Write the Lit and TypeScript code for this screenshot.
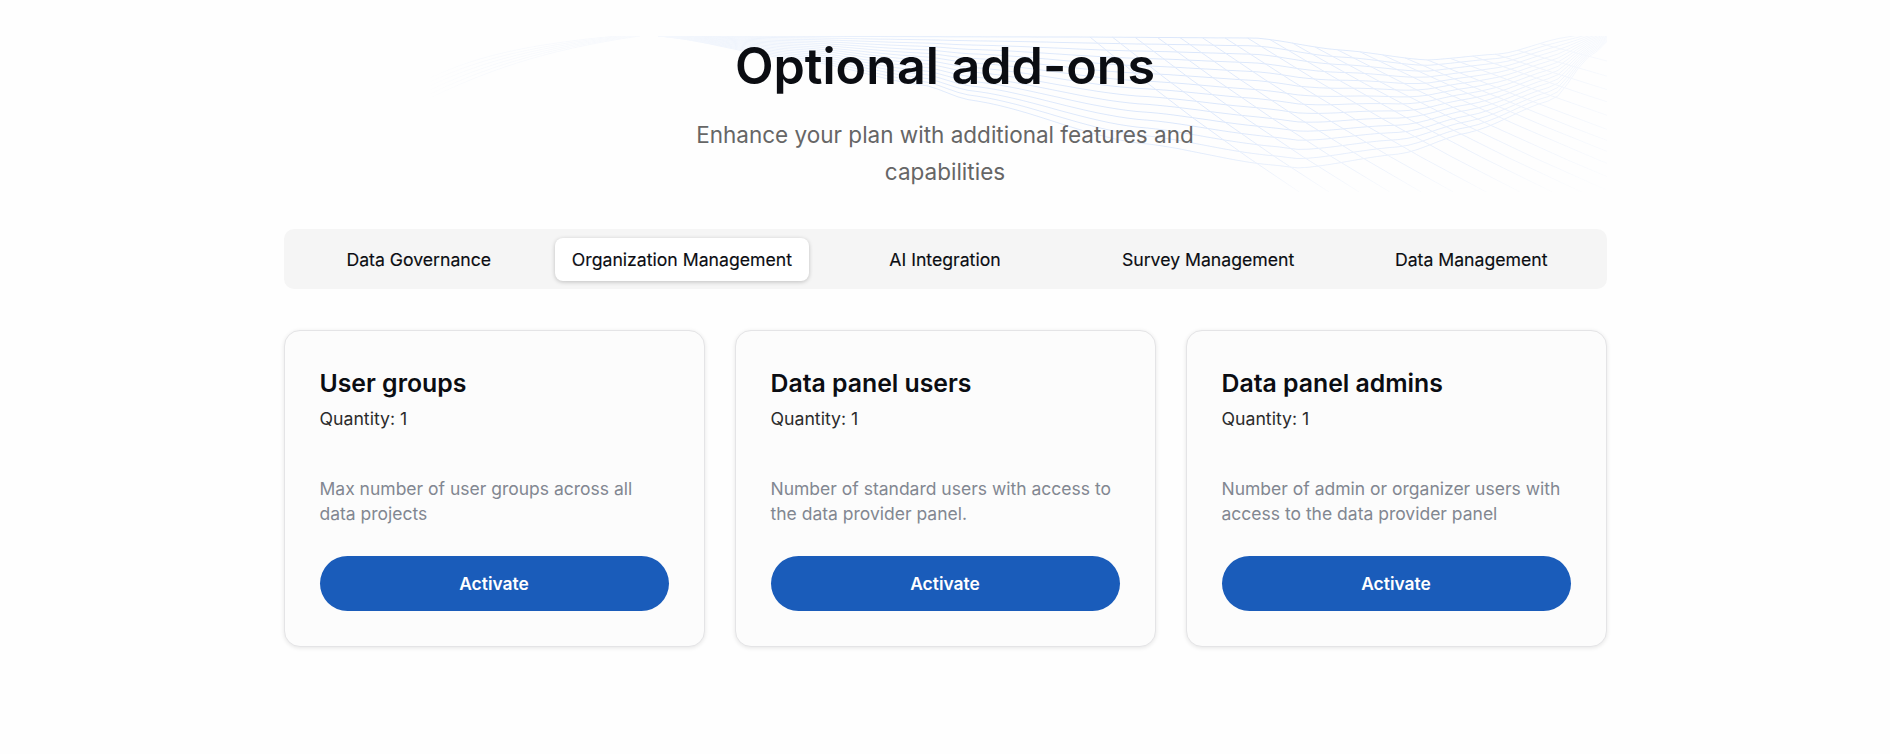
import { LitElement, html, css, svg } from "lit";
import { customElement } from "lit/decorators.js";

const lerpTable = (table: number[][], x: number) => {
  if (x <= table[0][0]) return table[0][1];
  for (let i = 1; i < table.length; i++) {
    if (x <= table[i][0]) {
      const [x0, y0] = table[i - 1];
      const [x1, y1] = table[i];
      const t = (x - x0) / (x1 - x0);
      const s = t * t * (3 - 2 * t);
      return y0 + (y1 - y0) * (t * 0.5 + s * 0.5);
    }
  }
  return table[table.length - 1][1];
};

const TOP = [[658, 0], [1067, 1], [1255, 2], [1340, 14], [1427, 24], [1500, 18], [1567, 1], [1620, -10]];
const LOW = [[658, 0], [800, 24], [923, 49], [970, 64], [1138, 107], [1272, 129], [1300, 132], [1400, 118], [1467, 97], [1553, 64], [1590, 20], [1620, -5]];

const familyA = () => {
  const out: string[] = [];
  const n = 14;
  for (let k = 0; k <= n; k++) {
    const s = Math.pow(k / n, 1.05);
    let d = "";
    for (let x = 658; x <= 1620; x += 10) {
      const t = lerpTable(TOP, x);
      const l = lerpTable(LOW, x);
      d += `${d ? "L" : "M"}${x} ${(t + (l - t) * s).toFixed(1)}`;
    }
    out.push(d);
  }
  return out;
};

const familyB = () => {
  const out: string[] = [];
  const n = 20;
  for (let k = 0; k <= n; k++) {
    const f = k / n;
    const x0 = 1090 + f * 450;
    const y0 = lerpTable(TOP, x0);
    const slope = 0.74 - 0.5 * f;
    const h = 156 - y0;
    const x1 = x0 + h / slope;
    const cx = x0 + (x1 - x0) * 0.5;
    const cy = y0 + h * 0.56;
    out.push(`M${x0.toFixed(1)} ${y0.toFixed(1)}Q${cx.toFixed(1)} ${cy.toFixed(1)} ${x1.toFixed(1)} 156`);
  }
  return out;
};

const familyC = () => {
  const out: string[] = [];
  for (let k = 0; k < 6; k++) {
    const o = k * 4;
    out.push(`M430 ${42 + o}C480 ${18 + o} 540 ${6 + o * 0.4} 640 ${-2 + o * 0.1}`);
  }
  return out;
};

@customElement("app-wave")
export class AppWave extends LitElement {
  static styles = css`
    :host {
      position: absolute;
      left: 420px;
      top: 36px;
      width: 1187px;
      height: 156px;
      display: block;
      pointer-events: none;
    }
    svg {
      display: block;
      width: 100%;
      height: 100%;
      -webkit-mask-image: linear-gradient(to bottom, #000 58%, rgba(0,0,0,0.6) 85%, rgba(0,0,0,0.15) 100%);
      mask-image: linear-gradient(to bottom, #000 58%, rgba(0,0,0,0.6) 85%, rgba(0,0,0,0.15) 100%);
    }
    .a { fill: none; stroke: #dbe7fb; stroke-width: 1; }
    .b { fill: none; stroke: #dfe9fb; stroke-width: 1; }
    .c { fill: none; stroke: #e8effb; stroke-width: 1; }
  `;
  render() {
    return html`<svg viewBox="420 0 1187 156" preserveAspectRatio="none" aria-hidden="true">
      <defs>
        <linearGradient id="fx" x1="420" x2="1607" y1="0" y2="0" gradientUnits="userSpaceOnUse">
          <stop offset="0" stop-color="#fff" stop-opacity="0"></stop>
          <stop offset="0.05" stop-color="#fff" stop-opacity="0.25"></stop>
          <stop offset="0.16" stop-color="#fff" stop-opacity="0.3"></stop>
          <stop offset="0.2" stop-color="#fff" stop-opacity="0.25"></stop>
          <stop offset="0.32" stop-color="#fff" stop-opacity="0.55"></stop>
          <stop offset="0.45" stop-color="#fff" stop-opacity="0.85"></stop>
          <stop offset="0.65" stop-color="#fff"></stop>
          <stop offset="0.88" stop-color="#fff" stop-opacity="0.75"></stop>
          <stop offset="1" stop-color="#fff" stop-opacity="0.2"></stop>
        </linearGradient>
        <mask id="mx" maskUnits="userSpaceOnUse" x="420" y="0" width="1187" height="156">
          <rect x="420" y="0" width="1187" height="156" fill="url(#fx)"></rect>
        </mask>
      </defs>
      <g mask="url(#mx)">
        ${familyC().map((d) => svg`<path class="c" d=${d}></path>`)}
        ${familyA().map((d) => svg`<path class="a" d=${d}></path>`)}
        ${familyB().map((d) => svg`<path class="b" d=${d}></path>`)}
      </g>
    </svg>`;
  }
}

const TABS = ["Data Governance", "Organization Management", "AI Integration", "Survey Management", "Data Management"];
const CARDS = [
  { t: "User groups", d: "Max number of user groups across all data projects" },
  { t: "Data panel users", d: "Number of standard users with access to the data provider panel." },
  { t: "Data panel admins", d: "Number of admin or organizer users with access to the data provider panel" },
];

@customElement("app-root")
export class AppRoot extends LitElement {
  static styles = css`
    :host {
      display: block;
      position: relative;
      min-height: 754px;
      background: #fefefe;
      font-family: Inter, "Liberation Sans", sans-serif;
      color: #0b0d12;
      overflow: hidden;
    }
    .wrap {
      position: relative;
      width: 1323px;
      margin: 0 auto;
      padding-top: 35px;
      display: flex;
      flex-direction: column;
    }
    h1 {
      margin: 0;
      text-align: center;
      font-size: 50.2px;
      line-height: 62px;
      font-weight: 600;
      color: #0b0d12;
    }
    .sub {
      margin: 19px auto 0;
      max-width: 600px;
      text-align: center;
      font-size: 22.5px;
      line-height: 37.4px;
      color: #666;
    }
    .tabs {
      margin-top: 38.2px;
      display: grid;
      grid-template-columns: repeat(5, 1fr);
      column-gap: 9.5px;
      padding: 9px 8.5px 8px 8.5px;
      background: #f5f5f5;
      border-radius: 10px;
    }
    .tab {
      height: 43px;
      display: flex;
      align-items: center;
      justify-content: center;
      border-radius: 8px;
      font-size: 17.65px;
      font-weight: 400;
      color: #0b0d12;
      -webkit-text-stroke: 0.15px #0b0d12;
    }
    .tab.active {
      background: #fff;
      box-shadow: 0 1px 4px rgba(0, 0, 0, 0.22);
    }
    .cards {
      margin-top: 41px;
      display: grid;
      grid-template-columns: repeat(3, 1fr);
      column-gap: 30px;
    }
    .card {
      box-sizing: border-box;
      height: 317px;
      padding: 34px 35px;
      background: #fcfcfc;
      border: 1px solid #e4e4e6;
      border-radius: 16px;
      box-shadow: 0 1px 4px rgba(0, 0, 0, 0.1);
      display: flex;
      flex-direction: column;
    }
    .card h3 {
      margin: 0;
      font-size: 24.8px;
      line-height: 36px;
      font-weight: 600;
      color: #0b0d12;
    }
    .qty {
      margin-top: 6px;
      font-size: 17.7px;
      line-height: 24px;
      color: #2b2b2b;
    }
    .desc {
      margin-top: 45px;
      font-size: 17.5px;
      line-height: 25px;
      color: #828791;
    }
    .btn {
      margin-top: 30px;
      height: 55px;
      border-radius: 28px;
      background: #1a5cba;
      color: #fff;
      display: flex;
      align-items: center;
      justify-content: center;
      font-size: 17.4px;
      font-weight: 600;
    }
  `;
  render() {
    return html`
      <app-wave></app-wave>
      <div class="wrap">
        <h1>Optional add-ons</h1>
        <div class="sub">Enhance your plan with additional features and capabilities</div>
        <div class="tabs">
          ${TABS.map((t, i) => html`<div class="tab ${i === 1 ? "active" : ""}">${t}</div>`)}
        </div>
        <div class="cards">
          ${CARDS.map(
            (c) => html`<div class="card">
              <h3>${c.t}</h3>
              <div class="qty">Quantity: 1</div>
              <div class="desc">${c.d}</div>
              <div class="btn">Activate</div>
            </div>`
          )}
        </div>
      </div>
    `;
  }
}
